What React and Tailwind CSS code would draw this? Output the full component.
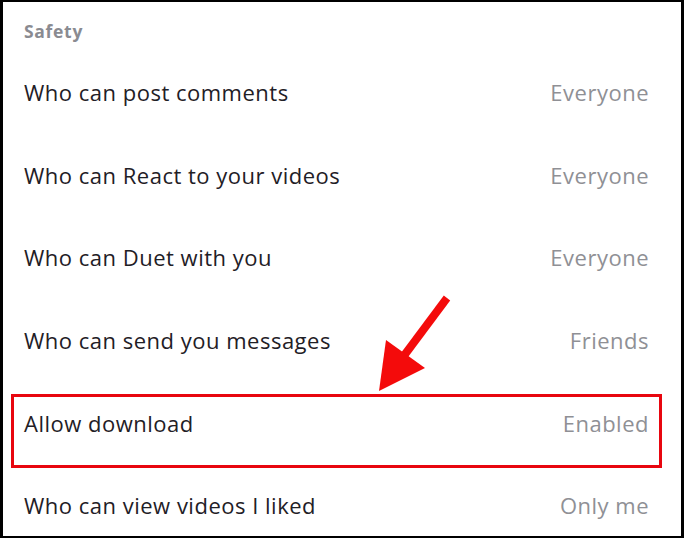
import React from 'react';

const rows = [
  { label: 'Who can post comments', value: 'Everyone' },
  { label: 'Who can React to your videos', value: 'Everyone' },
  { label: 'Who can Duet with you', value: 'Everyone' },
  { label: 'Who can send you messages', value: 'Friends' },
  { label: 'Allow download', value: 'Enabled' },
  { label: 'Who can view videos I liked', value: 'Only me' },
];

const App = () => {
  return (
    <div
      className="relative w-[684px] h-[538px] overflow-hidden bg-white border-black border-l-[3px] border-r-[3px] border-t-2 border-b-2"
      style={{ fontFamily: '"Open Sans", Lato, sans-serif' }}
    >
      {/* Section header */}
      <div className="h-[49px] pt-[18px] pl-[21px]">
        <div className="text-[17.5px] leading-[22px] font-bold tracking-[0.7px] text-[#8a8b91]">Safety</div>
      </div>

      {/* Rows */}
      {rows.map((row) => (
        <div key={row.label} className="h-[82.6px] flex items-center justify-between pl-[21px] pr-[33px]">
          <span className="text-[22px] leading-[28px] tracking-[0.5px] text-[#1f2026]">{row.label}</span>
          <span className="text-[22px] leading-[28px] tracking-[0.5px] text-[#8f9095] -mr-[1px]">{row.value}</span>
        </div>
      ))}

      {/* Highlight box */}
      <div className="absolute left-[8px] top-[392px] w-[651px] h-[74px] border-[3px] border-[#e8060f]" />

      {/* Arrow */}
      <svg className="absolute left-0 top-0" width="684" height="538" viewBox="0 0 684 538">
        <line x1="444" y1="296" x2="400" y2="355" stroke="#f40b0b" strokeWidth="8" />
        <polygon points="383,338 422,366 376,389" fill="#f40b0b" />
      </svg>
    </div>
  );
};

export default App;
